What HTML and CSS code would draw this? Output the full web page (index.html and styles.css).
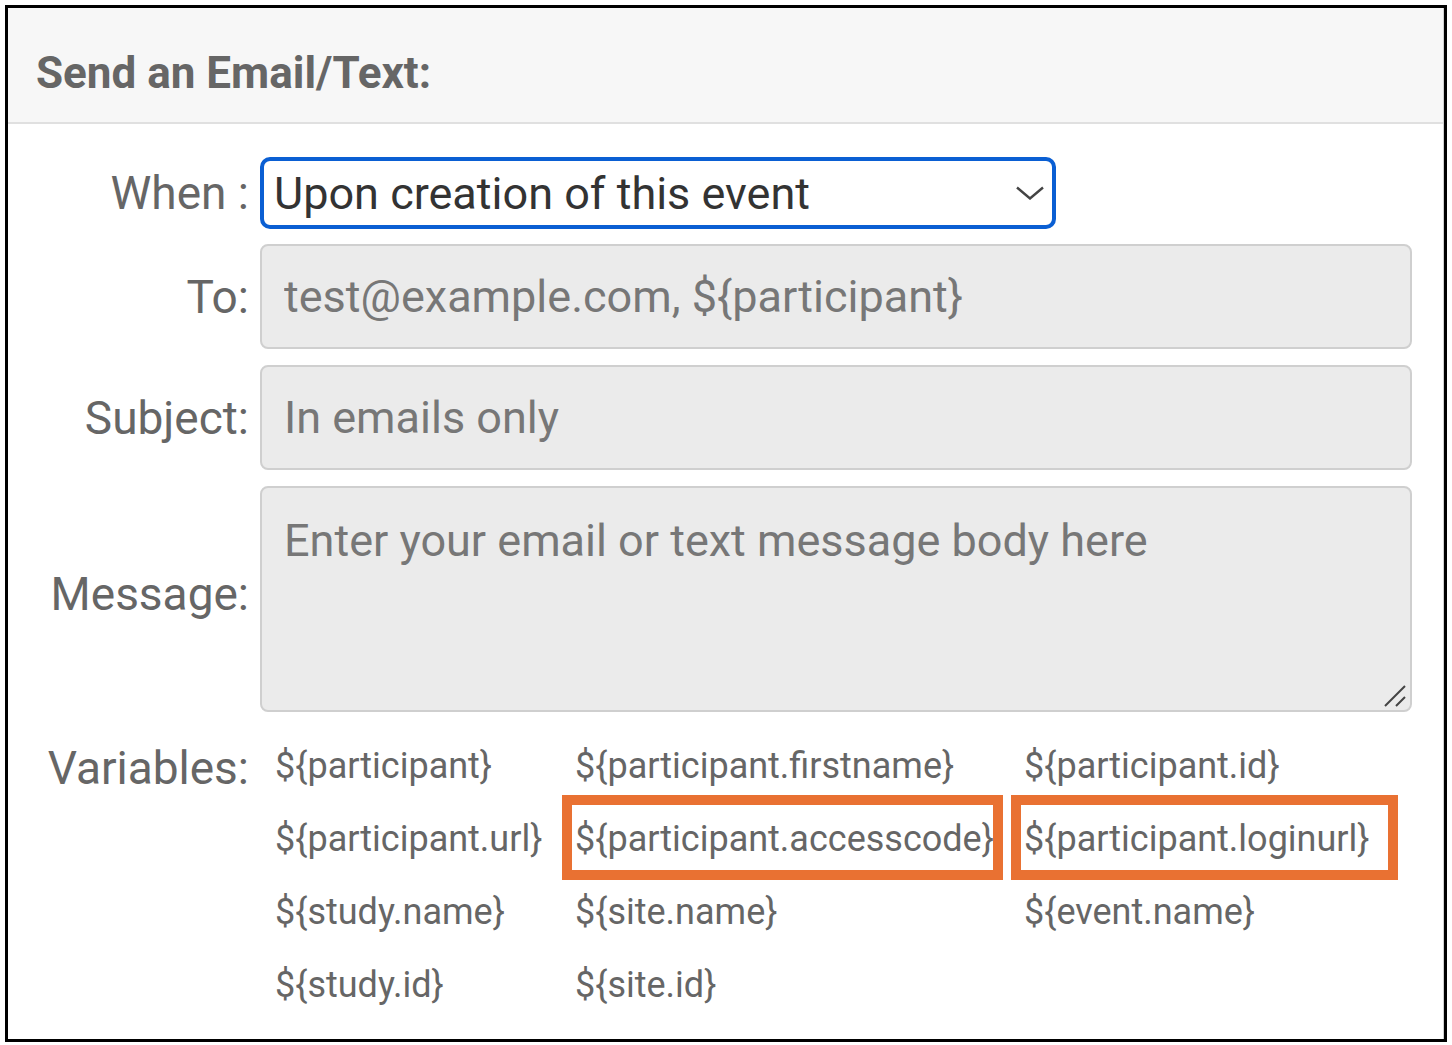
FILE: index.html
```html
<!DOCTYPE html>
<html lang="en">
<head>
    <meta charset="UTF-8">
    <meta name="viewport" content="width=device-width, initial-scale=1.0">
    <title>Send an Email/Text</title>
    <link rel="stylesheet" href="styles.css">
</head>
<body>
    <div class="frame">
        <div class="panel">
            <div class="panel-head">
                <h2>Send an Email/Text:</h2>
            </div>

            <form class="panel-body">
                <div class="row row-when">
                    <label class="label" for="when">When :</label>
                    <div class="select-wrap">
                        <select id="when" name="when">
                            <option>Upon creation of this event</option>
                        </select>
                        <svg class="chevron" width="28" height="14" viewBox="0 0 28 14">
                            <path d="M1 1.5 L14 12.5 L27 1.5" fill="none" stroke="#444" stroke-width="2.4"/>
                        </svg>
                    </div>
                </div>

                <div class="row">
                    <label class="label" for="to">To:</label>
                    <input class="field" type="text" id="to" name="to" placeholder="test@example.com, ${participant}">
                </div>

                <div class="row">
                    <label class="label" for="subject">Subject:</label>
                    <input class="field" type="text" id="subject" name="subject" placeholder="In emails only">
                </div>

                <div class="row">
                    <label class="label label-msg" for="message">Message:</label>
                    <div class="area-wrap">
                        <textarea class="field area" id="message" name="message" placeholder="Enter your email or text message body here"></textarea>
                        <svg class="grip" width="24" height="22" viewBox="0 0 24 22">
                            <path d="M2 21 L22 1 M13 21 L22 12" fill="none" stroke="#444" stroke-width="2"/>
                        </svg>
                    </div>
                </div>

                <div class="row row-vars">
                    <span class="label">Variables:</span>
                    <div class="vars">
                        <span class="var">${participant}</span>
                        <span class="var">${participant.firstname}</span>
                        <span class="var">${participant.id}</span>
                        <span class="var">${participant.url}</span>
                        <span class="var hl">${participant.accesscode}</span>
                        <span class="var hl">${participant.loginurl}</span>
                        <span class="var">${study.name}</span>
                        <span class="var">${site.name}</span>
                        <span class="var">${event.name}</span>
                        <span class="var">${study.id}</span>
                        <span class="var">${site.id}</span>
                    </div>
                </div>
            </form>
        </div>
    </div>
</body>
</html>
```

FILE: styles.css
```css
* {
    box-sizing: border-box;
}

body {
    margin: 0;
    padding: 0;
    background: #fff;
    font-family: Roboto, "Liberation Sans", sans-serif;
    color: #666;
}

.frame {
    margin: 5px;
    height: 1037px;
    border: 3px solid #000;
}

.panel {
    height: 100%;
    border-right: 1px solid #d0d0d0;
}

.panel-head {
    height: 116px;
    padding: 39px 28px 0;
    background-color: #f7f7f7;
    border-bottom: 2px solid #e0e0e0;
}

.panel-head h2 {
    margin: 0;
    font-size: 44px;
    line-height: 52px;
    font-weight: 700;
    color: #666;
}

.panel-body {
    padding-top: 33px;
}

.row {
    display: flex;
    align-items: center;
    margin-bottom: 16px;
}

.row-when {
    margin-bottom: 15px;
}

.label {
    flex: 0 0 252px;
    padding-right: 11px;
    text-align: right;
    font-size: 46px;
    line-height: 54px;
    color: #666;
}

.label-msg {
    padding-bottom: 10px;
}

.select-wrap {
    position: relative;
    width: 796px;
}

.select-wrap select {
    appearance: none;
    -webkit-appearance: none;
    display: block;
    width: 100%;
    height: 72px;
    padding: 0 50px 0 10px;
    border: 4px solid #0a5fd3;
    border-radius: 10px;
    background: #fff;
    font-family: inherit;
    font-size: 45px;
    color: #333;
    outline: none;
}

.chevron {
    position: absolute;
    right: 12px;
    top: 29px;
}

.field {
    display: block;
    width: 1152px;
    height: 105px;
    padding: 0 22px;
    border: 2px solid #cfcfcf;
    border-radius: 8px;
    background-color: #ebebeb;
    font-family: inherit;
    font-size: 45px;
    color: #555;
    outline: none;
}

.field::placeholder {
    color: #777;
}

.area-wrap {
    position: relative;
}

.area {
    height: 226px;
    padding-top: 26px;
    line-height: 1.2;
    resize: none;
}

.grip {
    position: absolute;
    right: 5px;
    bottom: 5px;
}

.row-vars {
    align-items: flex-start;
    margin-top: 18px;
    margin-bottom: 0;
}

.row-vars .label {
    margin-top: 11px;
}

.vars {
    display: grid;
    grid-template-columns: 292px 441px 387px;
    column-gap: 8px;
    margin-left: 2px;
}

.var {
    position: relative;
    padding-left: 13px;
    font-size: 36px;
    line-height: 73px;
    color: #666;
    white-space: nowrap;
}

.var.hl::after {
    content: "";
    position: absolute;
    left: 0;
    right: 0;
    top: -8px;
    bottom: -4px;
    border: 10px solid #e97132;
}
```
